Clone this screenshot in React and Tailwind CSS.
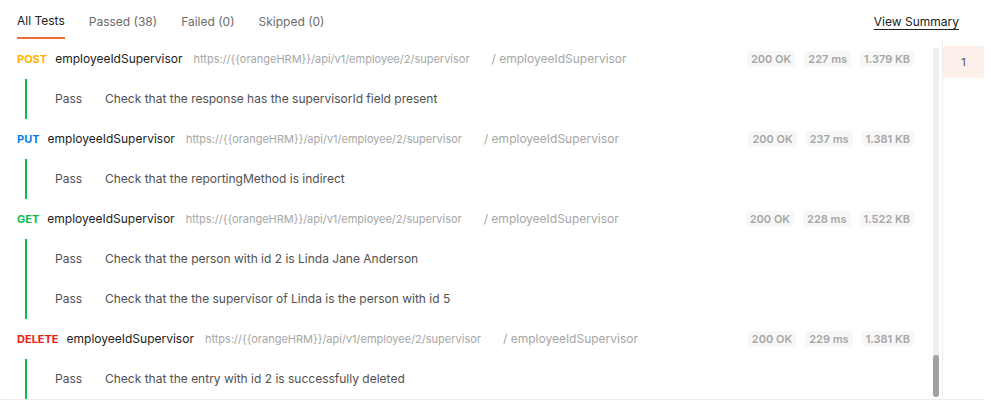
const requests = [
  {
    method: 'POST',
    color: 'text-[#ffb400]',
    status: '200 OK',
    time: '227 ms',
    size: '1.379 KB',
    tests: ['Check that the response has the supervisorId field present'],
  },
  {
    method: 'PUT',
    color: 'text-[#097bed]',
    status: '200 OK',
    time: '237 ms',
    size: '1.381 KB',
    tests: ['Check that the reportingMethod is indirect'],
  },
  {
    method: 'GET',
    color: 'text-[#0cbb52]',
    status: '200 OK',
    time: '228 ms',
    size: '1.522 KB',
    tests: [
      'Check that the person with id 2 is Linda Jane Anderson',
      'Check that the the supervisor of Linda is the person with id 5',
    ],
  },
  {
    method: 'DELETE',
    color: 'text-[#eb2013]',
    status: '200 OK',
    time: '229 ms',
    size: '1.381 KB',
    tests: ['Check that the entry with id 2 is successfully deleted'],
  },
]

function Badge({ children }) {
  return (
    <span className="h-[16px] px-[4px] flex items-center rounded-[4px] bg-[#f7f7f7] text-[11px] font-semibold text-[#a6a6a6]">
      {children}
    </span>
  )
}

function Request({ req }) {
  return (
    <div>
      <div className="h-[40px] flex items-center pl-[17px] pr-[19px]">
        <span className={`text-[11px] font-bold ${req.color}`}>{req.method}</span>
        <span className="ml-[8px] text-[12px] text-[#212121]">employeeIdSupervisor</span>
        <span className="ml-[11px] text-[11px] text-[#a6a6a6]">https://{'{{'}orangeHRM{'}}'}/api/v1/employee/2/supervisor</span>
        <span className="ml-[22px] text-[12px] text-[#a6a6a6]">/ employeeIdSupervisor</span>
        <div className="ml-auto flex items-center gap-[9px]">
          <Badge>{req.status}</Badge>
          <Badge>{req.time}</Badge>
          <Badge>{req.size}</Badge>
        </div>
      </div>
      <div className="ml-[25px] border-l-2 border-[#0cbb52]">
        {req.tests.map((t) => (
          <div key={t} className="h-[40px] flex items-center text-[12px] text-[#505050]">
            <span className="w-[78px] pl-[28px]">Pass</span>
            <span>{t}</span>
          </div>
        ))}
      </div>
    </div>
  )
}

export default function App() {
  return (
    <div className="w-[991px] h-[403px] bg-white overflow-hidden font-['Inter',sans-serif]">
      <div className="h-[39px] flex items-stretch pl-[17px] pr-[32px] text-[12px]">
        <div className="pt-[4px] flex items-center border-b-2 border-[#f26b3a] text-[#212121]">All Tests</div>
        <div className="pt-[4px] ml-[24px] flex items-center text-[#6b6b6b]">Passed (38)</div>
        <div className="pt-[4px] ml-[24px] flex items-center text-[#6b6b6b]">Failed (0)</div>
        <div className="pt-[4px] ml-[24px] flex items-center text-[#6b6b6b]">Skipped (0)</div>
        <div className="pt-[4px] ml-auto flex items-center text-[#212121] underline underline-offset-[3px]">View Summary</div>
      </div>
      <div className="w-[984px] h-[361px] flex border-b border-[#ededed]">
        <div className="w-[933px] overflow-hidden">
          {requests.map((r) => (
            <Request key={r.method} req={r} />
          ))}
        </div>
        <div className="w-[9px] pt-[9px] pb-[2px]">
          <div className="w-[6px] h-full rounded-full bg-[#efefef] flex flex-col justify-end">
            <div className="h-[42px] rounded-full bg-[#a1a1a1]" />
          </div>
        </div>
        <div className="flex-1 border-l border-[#ededed] pt-[7px]">
          <div className="h-[32px] bg-[#fdf0eb] flex items-center justify-center text-[11px] text-[#505050]">1</div>
        </div>
      </div>
    </div>
  )
}
